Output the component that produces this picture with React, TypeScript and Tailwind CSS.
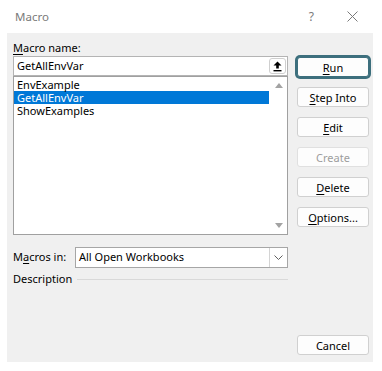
import React from "react";

const font = { fontFamily: '"Noto Sans", "Open Sans", sans-serif' };

function Btn({
  children,
  primary,
  disabled,
}: {
  children: React.ReactNode;
  primary?: boolean;
  disabled?: boolean;
}) {
  return (
    <div
      className={
        "h-[20px] w-[72px] flex items-center justify-center rounded-[3px] text-[11px] leading-none bg-[#fdfdfd] " +
        (primary
          ? "border border-[#3d6f7d] ring-2 ring-[#3d6f7d] text-black"
          : disabled
          ? "border border-[#e0e0e0] text-[#9d9d9d]"
          : "border border-[#d0d0d0] text-black")
      }
    >
      {children}
    </div>
  );
}

function U({ children }: { children: React.ReactNode }) {
  return <span className="underline underline-offset-[2px] decoration-[1px]">{children}</span>;
}

export default function App() {
  return (
    <div className="w-[382px] h-[371px] bg-white overflow-hidden" style={font}>
      {/* title bar */}
      <div className="h-[33px] flex items-center pl-[15px]">
        <span className="text-[11.5px] text-[#7a7a7a]">Macro</span>
        <span className="ml-auto text-[12px] text-[#7a7a7a] mr-[33px]">?</span>
        <svg width="11" height="11" viewBox="0 0 11 11" className="mr-[24px]">
          <path d="M0.5 0.5 L10.5 10.5 M10.5 0.5 L0.5 10.5" stroke="#7a7a7a" strokeWidth="1" fill="none" />
        </svg>
      </div>

      {/* body */}
      <div className="ml-[7px] w-[366px] h-[329px] bg-[#f0f0f0] flex pt-[7px] pl-[6px] pb-[7px]">
        {/* left column */}
        <div className="w-[275px] flex flex-col">
          <div className="h-[16px] leading-[16px] text-[11px] text-black">
            <U>M</U>acro name:
          </div>
          <div className="h-[20px] border border-[#b4b4b4] bg-white flex items-center pl-[3px] pr-[1px]">
            <span className="text-[11px] text-black">GetAllEnvVar</span>
            <div className="ml-auto w-[17px] h-[16px] rounded-[3px] border border-[#cfcfcf] bg-white flex items-center justify-center">
              <svg width="9" height="11" viewBox="0 0 9 11">
                <path d="M4.5 0.5 L8.5 4.5 L5.8 4.5 L5.8 7.5 L3.2 7.5 L3.2 4.5 L0.5 4.5 Z" fill="#000" />
                <rect x="0.5" y="9" width="8" height="1.4" fill="#000" />
              </svg>
            </div>
          </div>
          <div className="h-[159px] border border-[#a0a0a0] bg-white flex">
            <div className="flex-1 pt-[1px] pr-[1px]">
              <div className="h-[13px] leading-[13px] pl-[3px] text-[11px] text-black">EnvExample</div>
              <div className="h-[13px] leading-[13px] pl-[3px] text-[11px] text-white bg-[#0078d7]">GetAllEnvVar</div>
              <div className="h-[13px] leading-[13px] pl-[3px] text-[11px] text-black">ShowExamples</div>
            </div>
            <div className="w-[17px] flex flex-col items-center justify-between pt-[6px] pb-[6px]">
              <svg width="8" height="5" viewBox="0 0 8 5">
                <path d="M4 0 L8 5 L0 5 Z" fill="#a3a3a3" />
              </svg>
              <svg width="8" height="5" viewBox="0 0 8 5">
                <path d="M0 0 L8 0 L4 5 Z" fill="#a3a3a3" />
              </svg>
            </div>
          </div>

          <div className="mt-[12px] h-[21px] flex items-center">
            <span className="w-[62px] text-[11px] text-black">
              M<U>a</U>cros in:
            </span>
            <div className="flex-1 h-[21px] border border-[#a6a6a6] bg-white flex items-center">
              <span className="pl-[3px] text-[11px] text-black">All Open Workbooks</span>
              <div className="ml-auto h-full w-[18px] border-l border-[#d4d4d4] flex items-center justify-center">
                <svg width="9" height="5" viewBox="0 0 9 5">
                  <path d="M0.5 0.5 L4.5 4.5 L8.5 0.5" stroke="#606060" strokeWidth="1" fill="none" />
                </svg>
              </div>
            </div>
          </div>

          <div className="mt-[4px] h-[14px] flex items-center">
            <span className="text-[11px] text-black leading-[14px]">Description</span>
            <div className="ml-[5px] flex-1 h-px bg-[#d9d9d9]" />
          </div>
        </div>

        {/* right column */}
        <div className="ml-[9px] w-[72px] flex flex-col">
          <div className="mt-[17px] flex flex-col gap-[10px]">
            <Btn primary>
              <U>R</U>un
            </Btn>
            <Btn>
              <U>S</U>tep Into
            </Btn>
            <Btn>
              <U>E</U>dit
            </Btn>
            <Btn disabled>Create</Btn>
            <Btn>
              <U>D</U>elete
            </Btn>
            <Btn>
              <U>O</U>ptions...
            </Btn>
          </div>
          <div className="mt-auto">
            <Btn>Cancel</Btn>
          </div>
        </div>
      </div>
    </div>
  );
}
